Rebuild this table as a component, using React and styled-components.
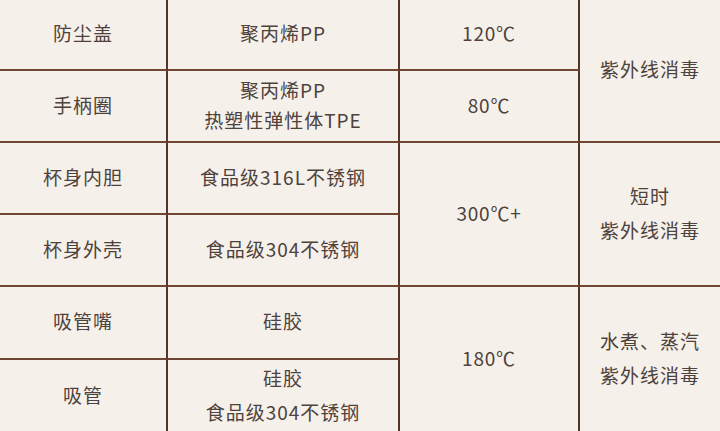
import React from "react";
import styled, { createGlobalStyle } from "styled-components";

const Global = createGlobalStyle`
  html, body {
    margin: 0;
    padding: 0;
    background: #f6f0eb;
  }
  body {
    width: 720px;
    height: 431px;
    overflow: hidden;
  }
`;

const Table = styled.div`
  display: grid;
  grid-template-columns: 168px 232px 180px 140px;
  grid-template-rows: 71px 72px 72px 72px 73px 74px;
  width: 720px;
  background: #f6f0eb;
  font-family: "Noto Sans CJK SC", "Noto Sans", sans-serif;
  color: #4d423c;
`;

const Cell = styled.div`
  grid-row: ${(p) => (p.span ? `span ${p.span}` : "auto")};
  display: flex;
  flex-direction: column;
  align-items: center;
  justify-content: center;
  box-sizing: border-box;
  border-bottom: 2px solid #6e4633;
  border-right: ${(p) => (p.last ? "none" : "2px solid #553528")};
  font-size: 19px;
  line-height: ${(p) => p.lh || 34}px;
  letter-spacing: 1px;
  background: #f6f0eb;
  padding-bottom: 3px;
`;

const Temp = styled.span`
  font-size: 19px;
  letter-spacing: 0.8px;
`;

export default function App() {
  return (
    <>
      <Global />
      <Table>
        <Cell>防尘盖</Cell>
        <Cell>聚丙烯PP</Cell>
        <Cell><Temp>120℃</Temp></Cell>
        <Cell span={2} last>紫外线消毒</Cell>

        <Cell>手柄圈</Cell>
        <Cell lh={30}>
          <span>聚丙烯PP</span>
          <span>热塑性弹性体TPE</span>
        </Cell>
        <Cell><Temp>80℃</Temp></Cell>

        <Cell>杯身内胆</Cell>
        <Cell>食品级316L不锈钢</Cell>
        <Cell span={2}><Temp>300℃+</Temp></Cell>
        <Cell span={2} last>
          <span>短时</span>
          <span>紫外线消毒</span>
        </Cell>

        <Cell>杯身外壳</Cell>
        <Cell>食品级304不锈钢</Cell>

        <Cell>吸管嘴</Cell>
        <Cell>硅胶</Cell>
        <Cell span={2}><Temp>180℃</Temp></Cell>
        <Cell span={2} last>
          <span>水煮、蒸汽</span>
          <span>紫外线消毒</span>
        </Cell>

        <Cell>吸管</Cell>
        <Cell>
          <span>硅胶</span>
          <span>食品级304不锈钢</span>
        </Cell>
      </Table>
    </>
  );
}
